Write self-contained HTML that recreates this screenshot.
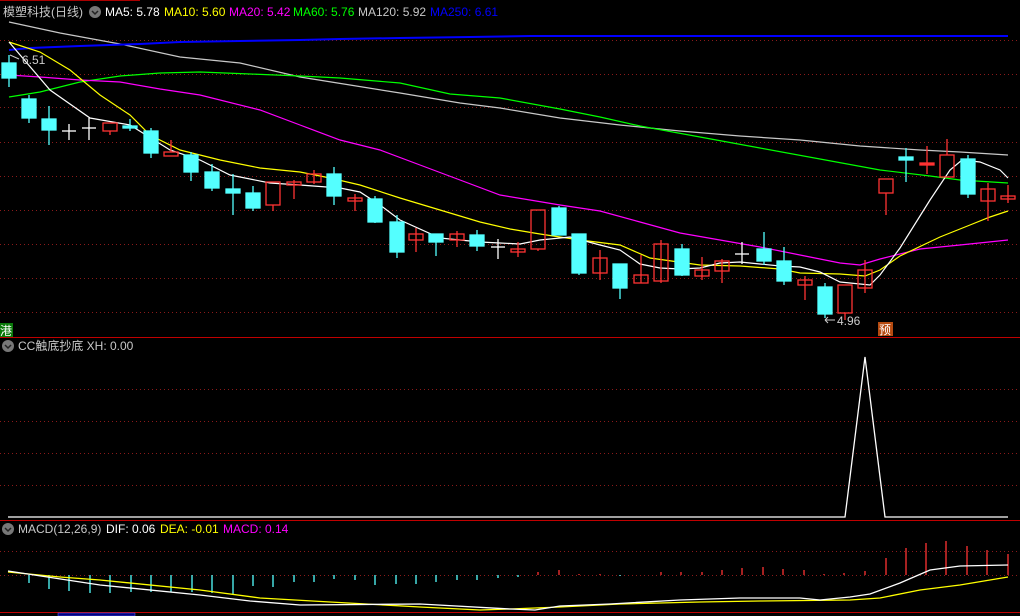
<!DOCTYPE html>
<html><head><meta charset="utf-8"><style>
html,body{margin:0;padding:0;background:#000;width:1020px;height:616px;overflow:hidden}
svg{display:block}
text{font-family:"Liberation Sans","Noto Sans CJK SC",sans-serif;font-size:12px}
</style></head><body>
<svg width="1020" height="616" viewBox="0 0 1020 616" xmlns="http://www.w3.org/2000/svg">
<rect width="1020" height="616" fill="#000"/>
<line x1="0" y1="0.5" x2="140" y2="0.5" stroke="#a00" />
<g stroke="#8b1a1a" stroke-dasharray="1,3" stroke-width="1">
<line x1="0" y1="40.5" x2="1020" y2="40.5"/><line x1="0" y1="74.5" x2="1020" y2="74.5"/>
<line x1="0" y1="107.5" x2="1020" y2="107.5"/><line x1="0" y1="142.5" x2="1020" y2="142.5"/>
<line x1="0" y1="176.5" x2="1020" y2="176.5"/><line x1="0" y1="210.5" x2="1020" y2="210.5"/>
<line x1="0" y1="244.5" x2="1020" y2="244.5"/><line x1="0" y1="278.5" x2="1020" y2="278.5"/>
<line x1="0" y1="312.5" x2="1020" y2="312.5"/>
<line x1="0" y1="389.5" x2="1020" y2="389.5"/><line x1="0" y1="421.5" x2="1020" y2="421.5"/>
<line x1="0" y1="453.5" x2="1020" y2="453.5"/><line x1="0" y1="485.5" x2="1020" y2="485.5"/>
<line x1="0" y1="551.5" x2="1020" y2="551.5"/><line x1="0" y1="575.5" x2="1020" y2="575.5"/>
</g>
<g stroke="#c00000" stroke-width="1">
<line x1="0" y1="337.5" x2="1020" y2="337.5"/>
<line x1="0" y1="520.5" x2="1020" y2="520.5"/>
<line x1="0" y1="612.5" x2="1020" y2="612.5"/>
</g>
<rect x="58" y="613" width="77" height="3" fill="#000080" stroke="#66f" stroke-width="0.5"/>

<g fill="none" stroke-width="1.2">
<polyline stroke="#c8c8c8" points="9,22 60,33 120,44 180,57 240,63 300,77 350,85 400,93 460,103 500,108 560,118 620,125 680,131 740,136 800,140 860,146 920,150 960,152 1008,155"/>
<polyline stroke="#0000ff" stroke-width="2" points="9,50 30,48 80,46 140,44 180,42 240,41 300,40 340,39 400,38 470,37 530,36 1008,36"/>
<polyline stroke="#00ff00" points="9,97 40,92 80,82 120,76 160,73 200,72 250,74 300,76 340,78 400,83 450,94 500,98 560,109 600,117 640,126 700,137 760,148 820,159 880,170 930,176 960,180 1008,183"/>
<polyline stroke="#ff00ff" points="9,75 40,77 80,80 120,82 160,89 200,95 260,110 300,125 340,140 380,150 420,165 460,180 500,195 530,200 560,205 600,211 640,222 680,233 720,240 760,247 800,255 840,263 860,265 880,259 920,249 960,245 1008,240"/>
<polyline stroke="#ffff00" points="9,42 40,52 70,70 100,95 130,115 150,135 180,150 220,160 260,168 300,172 330,178 360,185 400,198 440,210 480,222 510,229 540,234 580,240 620,245 650,258 700,265 740,266 780,269 800,273 840,274 865,276 880,270 900,256 940,237 970,225 990,217 1008,211"/>
<polyline stroke="#ffffff" points="9,42 50,90 90,118 130,125 170,150 200,160 230,175 270,183 300,185 340,188 360,192 380,205 400,220 440,238 480,242 500,243 520,244 540,240 570,237 600,245 620,250 640,264 660,268 680,269 700,268 720,263 740,262 760,264 780,266 800,267 820,272 840,282 870,285 880,275 900,248 930,200 950,170 962,160 980,162 1000,170 1008,178"/>
</g>

<g stroke-width="1.3">
<g fill="#54ffff" stroke="#54ffff">
<line x1="9" y1="55" x2="9" y2="87"/><rect x="2" y="63" width="14" height="15"/>
<line x1="29" y1="95" x2="29" y2="123"/><rect x="22" y="99" width="14" height="19"/>
<line x1="49" y1="106" x2="49" y2="145"/><rect x="42" y="119" width="14" height="11"/>
<line x1="130" y1="119" x2="130" y2="131"/><rect x="123" y="126" width="14" height="2"/>
<line x1="151" y1="128" x2="151" y2="158"/><rect x="144" y="131" width="14" height="22"/>
<line x1="191" y1="152" x2="191" y2="181"/><rect x="184" y="155" width="14" height="17"/>
<line x1="212" y1="164" x2="212" y2="191"/><rect x="205" y="172" width="14" height="16"/>
<line x1="233" y1="174" x2="233" y2="215"/><rect x="226" y="189" width="14" height="4"/>
<line x1="253" y1="186" x2="253" y2="211"/><rect x="246" y="193" width="14" height="15"/>
<line x1="334" y1="167" x2="334" y2="205"/><rect x="327" y="174" width="14" height="22"/>
<line x1="375" y1="196" x2="375" y2="223"/><rect x="368" y="199" width="14" height="23"/>
<line x1="397" y1="215" x2="397" y2="258"/><rect x="390" y="222" width="14" height="30"/>
<line x1="436" y1="234" x2="436" y2="256"/><rect x="429" y="234" width="14" height="8"/>
<line x1="477" y1="230" x2="477" y2="251"/><rect x="470" y="235" width="14" height="11"/>
<line x1="559" y1="206" x2="559" y2="235"/><rect x="552" y="208" width="14" height="27"/>
<line x1="579" y1="234" x2="579" y2="275"/><rect x="572" y="234" width="14" height="39"/>
<line x1="620" y1="264" x2="620" y2="299"/><rect x="613" y="264" width="14" height="24"/>
<line x1="682" y1="244" x2="682" y2="276"/><rect x="675" y="249" width="14" height="26"/>
<line x1="764" y1="232" x2="764" y2="265"/><rect x="757" y="249" width="14" height="12"/>
<line x1="784" y1="247" x2="784" y2="285"/><rect x="777" y="261" width="14" height="20"/>
<line x1="825" y1="283" x2="825" y2="318"/><rect x="818" y="287" width="14" height="27"/>
<line x1="906" y1="148" x2="906" y2="182"/><rect x="899" y="157" width="14" height="3"/>
<line x1="968" y1="155" x2="968" y2="198"/><rect x="961" y="159" width="14" height="35"/>
</g>
<g fill="none" stroke="#ff3333">
<line x1="110" y1="131" x2="110" y2="135"/><rect x="103" y="123" width="14" height="8"/>
<line x1="171" y1="140" x2="171" y2="152"/><rect x="164" y="152" width="14" height="4"/>
<line x1="273" y1="205" x2="273" y2="211"/><rect x="266" y="182" width="14" height="23"/>
<line x1="294" y1="180" x2="294" y2="199"/><rect x="287" y="182" width="14" height="3"/>
<line x1="314" y1="170" x2="314" y2="184"/><rect x="307" y="174" width="14" height="8"/>
<line x1="355" y1="194" x2="355" y2="211"/><rect x="348" y="198" width="14" height="3"/>
<line x1="416" y1="228" x2="416" y2="252"/><rect x="409" y="234" width="14" height="6"/>
<line x1="457" y1="231" x2="457" y2="247"/><rect x="450" y="234" width="14" height="6"/>
<line x1="518" y1="242" x2="518" y2="257"/><rect x="511" y="249" width="14" height="3"/>
<line x1="538" y1="249" x2="538" y2="251"/><rect x="531" y="210" width="14" height="39"/>
<line x1="600" y1="250" x2="600" y2="280"/><rect x="593" y="258" width="14" height="15"/>
<line x1="641" y1="255" x2="641" y2="283"/><rect x="634" y="275" width="14" height="8"/>
<line x1="661" y1="240" x2="661" y2="283"/><rect x="654" y="244" width="14" height="37"/>
<line x1="702" y1="257" x2="702" y2="280"/><rect x="695" y="270" width="14" height="6"/>
<line x1="722" y1="259" x2="722" y2="283"/><rect x="715" y="261" width="14" height="10"/>
<line x1="805" y1="276" x2="805" y2="300"/><rect x="798" y="280" width="14" height="5"/>
<line x1="845" y1="313" x2="845" y2="320"/><rect x="838" y="285" width="14" height="28"/>
<line x1="865" y1="260" x2="865" y2="293"/><rect x="858" y="270" width="14" height="18"/>
<line x1="886" y1="193" x2="886" y2="215"/><rect x="879" y="179" width="14" height="14"/>
<line x1="927" y1="146" x2="927" y2="174"/><rect x="920" y="163" width="14" height="2" fill="#ff3333"/>
<line x1="947" y1="139" x2="947" y2="155"/><rect x="940" y="155" width="14" height="22"/>
<line x1="988" y1="183" x2="988" y2="221"/><rect x="981" y="189" width="14" height="12"/>
<line x1="1008" y1="185" x2="1008" y2="203"/><rect x="1001" y="196" width="14" height="3"/>
</g>
<g stroke="#fff">
<line x1="69" y1="124" x2="69" y2="140"/><line x1="62" y1="131" x2="76" y2="131"/>
<line x1="89" y1="118" x2="89" y2="140"/><line x1="82" y1="128" x2="96" y2="128"/>
<line x1="498" y1="239" x2="498" y2="259"/><line x1="491" y1="247" x2="505" y2="247"/>
<line x1="742" y1="242" x2="742" y2="264"/><line x1="735" y1="254" x2="749" y2="254"/>
</g>
</g>
<line x1="10" y1="55" x2="19" y2="59" stroke="#ccc"/>
<text x="22" y="64" fill="#ccc">6.51</text>
<path d="M825,320 h10 M825,320 l3,-3 M825,320 l3,3" stroke="#ccc" fill="none"/>
<text x="837" y="325" fill="#ccc">4.96</text>
<rect x="0" y="323" width="13" height="14" fill="#0a7a0a"/>
<text x="0" y="335" fill="#fff">港</text>
<rect x="878" y="322" width="15" height="14" fill="#b54a10"/>
<text x="879" y="334" fill="#fff">预</text>

<text x="3" y="16" fill="#c8c8c8" textLength="80">模塑科技(日线)</text>
<circle cx="95" cy="12" r="6" fill="#777"/><path d="M92,11 l3,3 l3,-3" stroke="#222" fill="none" stroke-width="1.5"/>
<text x="105" y="16" fill="#fff">MA5: 5.78</text>
<text x="164" y="16" fill="#ffff00">MA10: 5.60</text>
<text x="229" y="16" fill="#ff00ff">MA20: 5.42</text>
<text x="293" y="16" fill="#00ff00">MA60: 5.76</text>
<text x="358" y="16" fill="#c8c8c8">MA120: 5.92</text>
<text x="430" y="16" fill="#0000ff">MA250: 6.61</text>

<circle cx="8" cy="346" r="6" fill="#777"/><path d="M5,345 l3,3 l3,-3" stroke="#222" fill="none" stroke-width="1.5"/>
<text x="18" y="350" fill="#c8c8c8">CC触底抄底 XH: 0.00</text>
<circle cx="8" cy="529" r="6" fill="#777"/><path d="M5,528 l3,3 l3,-3" stroke="#222" fill="none" stroke-width="1.5"/>
<text x="18" y="533" fill="#c8c8c8">MACD(12,26,9)</text>
<text x="106" y="533" fill="#fff">DIF: 0.06</text>
<text x="160" y="533" fill="#ffff00">DEA: -0.01</text>
<text x="223" y="533" fill="#ff00ff">MACD: 0.14</text>

<polyline fill="none" stroke="#fff" stroke-width="1.3" points="8,517 845,517 865,357 885,517 1008,517"/>

<g stroke="#54ffff" stroke-width="1.3">
<line x1="29" y1="575" x2="29" y2="583"/><line x1="49" y1="575" x2="49" y2="589"/>
<line x1="69" y1="575" x2="69" y2="591"/><line x1="90" y1="575" x2="90" y2="593"/>
<line x1="110" y1="575" x2="110" y2="593"/><line x1="131" y1="575" x2="131" y2="592"/>
<line x1="151" y1="575" x2="151" y2="592"/><line x1="171" y1="575" x2="171" y2="592"/>
<line x1="192" y1="575" x2="192" y2="592"/><line x1="212" y1="575" x2="212" y2="593"/>
<line x1="233" y1="575" x2="233" y2="594"/><line x1="253" y1="575" x2="253" y2="586"/>
<line x1="273" y1="575" x2="273" y2="587"/><line x1="294" y1="575" x2="294" y2="582"/>
<line x1="314" y1="575" x2="314" y2="582"/><line x1="334" y1="575" x2="334" y2="579"/>
<line x1="355" y1="575" x2="355" y2="580"/><line x1="375" y1="575" x2="375" y2="585"/>
<line x1="396" y1="575" x2="396" y2="584"/><line x1="416" y1="575" x2="416" y2="584"/>
<line x1="436" y1="575" x2="436" y2="582"/><line x1="457" y1="575" x2="457" y2="580"/>
<line x1="477" y1="575" x2="477" y2="580"/><line x1="498" y1="575" x2="498" y2="578"/>
<line x1="518" y1="575" x2="518" y2="577"/><line x1="620" y1="575" x2="620" y2="576"/>
</g>
<g stroke="#ff3333" stroke-width="1.3">
<line x1="538" y1="575" x2="538" y2="572"/><line x1="559" y1="575" x2="559" y2="570"/>
<line x1="579" y1="575" x2="579" y2="574"/><line x1="600" y1="575" x2="600" y2="574"/>
<line x1="661" y1="575" x2="661" y2="572"/><line x1="681" y1="575" x2="681" y2="572"/>
<line x1="702" y1="575" x2="702" y2="572"/><line x1="722" y1="575" x2="722" y2="570"/>
<line x1="742" y1="575" x2="742" y2="568"/><line x1="763" y1="575" x2="763" y2="567"/>
<line x1="783" y1="575" x2="783" y2="569"/><line x1="804" y1="575" x2="804" y2="570"/>
<line x1="824" y1="575" x2="824" y2="574"/><line x1="844" y1="575" x2="844" y2="573"/>
<line x1="865" y1="575" x2="865" y2="571"/><line x1="886" y1="575" x2="886" y2="558"/>
<line x1="906" y1="575" x2="906" y2="548"/><line x1="926" y1="575" x2="926" y2="543"/>
<line x1="946" y1="575" x2="946" y2="541"/><line x1="967" y1="575" x2="967" y2="546"/>
<line x1="987" y1="575" x2="987" y2="550"/><line x1="1008" y1="575" x2="1008" y2="554"/>
</g>
<polyline fill="none" stroke="#ffff00" stroke-width="1.3" points="8,572 60,577 100,580 200,590 260,598 330,602 420,607 480,610 510,609 560,607 620,604 700,602 760,601 850,600 880,598 920,590 960,585 1008,577"/>
<polyline fill="none" stroke="#fff" stroke-width="1.3" points="8,571 100,585 200,595 250,601 300,605 420,604 510,609 535,610 560,606 610,604 680,600 740,598 800,598 820,600 850,597 870,594 900,583 930,570 960,566 1008,565"/>
</svg>
</body></html>
